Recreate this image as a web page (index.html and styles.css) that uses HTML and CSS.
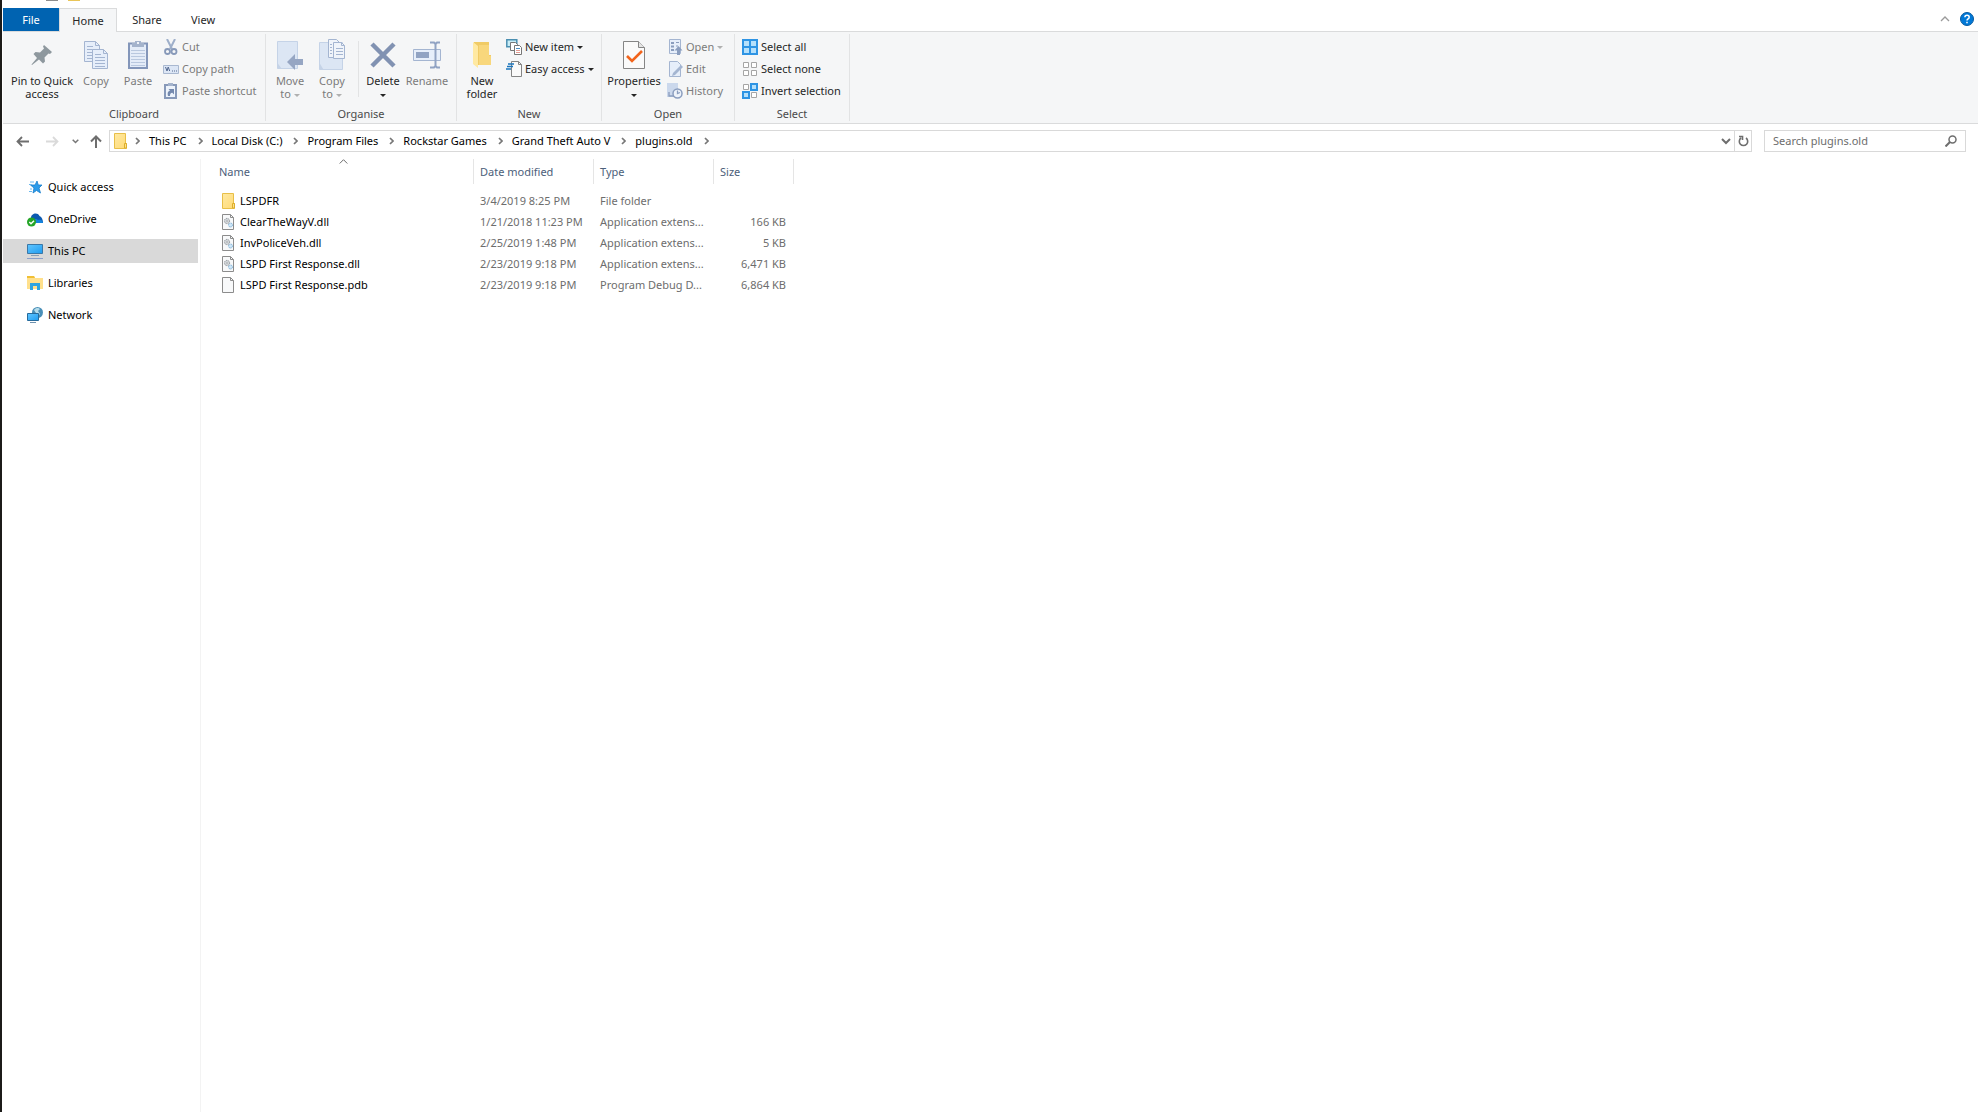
FILE: index.html
```html
<!DOCTYPE html>
<html lang="en"><head><meta charset="utf-8"><title>plugins.old</title>
<link rel="stylesheet" href="styles.css"></head>
<body>
<svg class="defs" width="0" height="0" aria-hidden="true">
<defs>
<linearGradient id="gold" x1="0" y1="0" x2="1" y2="1"><stop offset="0" stop-color="#ffe9a2"/><stop offset="1" stop-color="#ffda75"/></linearGradient>
<linearGradient id="blue" x1="0" y1="0" x2="1" y2="1"><stop offset="0" stop-color="#62c6ff"/><stop offset="1" stop-color="#1f9cf0"/></linearGradient>
</defs>
<symbol id="folder" viewBox="0 0 14 16"><path d="M.5.5h11v10h1v5H.5z" fill="url(#gold)" stroke="#e8bf48"/><path d="M10.500 15V10.500h2V15z" fill="#ffe08a" stroke="#dcae2c"/></symbol>
<symbol id="file" viewBox="0 0 12 16"><path d="M.5.5h8l3 3v12H.5z" fill="#f8f9fa" stroke="#8c8c8c"/><path d="M8.500.5v3h3" fill="none" stroke="#8c8c8c"/></symbol>
<symbol id="dll" viewBox="0 0 12 16"><path d="M.5.5h8l3 3v12H.5z" fill="#f8f9fa" stroke="#8c8c8c"/><path d="M8.500.5v3h3" fill="none" stroke="#8c8c8c"/><circle cx="5" cy="7" r="2.600" fill="#dfe3e6" stroke="#868c91" stroke-dasharray="1.200 .6"/><circle cx="5" cy="7" r="1" fill="#fff" stroke="#868c91" stroke-width=".6"/><circle cx="8.500" cy="11" r="2" fill="#cfe6f7" stroke="#76acd4" stroke-dasharray="1.200 .6"/></symbol>
<symbol id="chev" viewBox="0 0 5 8"><path d="M1 1l3 3-3 3" fill="none" stroke="#777" stroke-width="1.700"/></symbol>
</svg>
<div class="window">
<div class="title-bar"><span class="grey-chip"></span><span class="gold-chip"></span></div>
<nav class="tabs">
<button class="tab file-tab">File</button><button class="tab home-tab">Home</button><button class="tab share-tab">Share</button><button class="tab view-tab">View</button>
<span class="spacer"></span>
<button class="tool" aria-label="Minimise the ribbon"><svg width="10" height="6"><path d="M1 5l4-4 4 4" fill="none" stroke="#9a9a9a" stroke-width="1.300"/></svg></button>
<button class="tool help" aria-label="Help"><svg width="14" height="14"><circle cx="7" cy="7" r="6.500" fill="#0078d7" stroke="#075a9f"/><path d="M4.900 5.200c0-2.700 4.300-2.700 4.300 0C9.200 6.800 7 6.800 7 8.500M7 9.700v1.600" fill="none" stroke="#fff" stroke-width="1.500"/></svg></button>
</nav>
<div class="ribbon">
<section class="group clipboard"><div class="items">
<button class="big pin"><span class="pic"><svg width="22" height="22" viewBox="0 0 22 22"><path d="M13 1l8 7-2 2-1.500-.5-4 4 .5 4-2 2-4-4L1 21l-.5-.5L6 14 2.500 10l2-2 4.500.5 4-4-1-2z" fill="#8e989e"/></svg></span>Pin to Quick<br>access</button>
<button class="big off"><span class="pic"><svg width="26" height="30" viewBox="0 0 26 30"><g fill="#e6eefa" stroke="#a4b5d1"><path d="M1.500 1.500h11l4 4v16h-15z"/><path d="M12.500 1.500v4h4M4 6.500h6M4 9.500h10M4 12.500h10M4 15.500h10M4 18.500h10" fill="none"/><path d="M9.500 9.500h11l4 4v15h-15z"/><path d="M20.500 9.500v4h4M12 14.500h6M12 17.500h10M12 20.500h10M12 23.500h10M12 26.500h10" fill="none"/></g></svg></span>Copy</button>
<button class="big off"><span class="pic"><svg width="22" height="30" viewBox="0 0 22 30"><path d="M2 3.500h18V28H2z" fill="#e4ecf8" stroke="#8396ba" stroke-width="2"/><path d="M4 10.500h14M4 13.500h14M4 16.500h14M4 19.500h14M4 22.500h14M4 25.500h14" stroke="#b9c8df"/><path d="M5 3h3V1h6v2h3v4H5z" fill="#a4b3cc"/><path d="M10 2h2v2h-2z" fill="#eef2f8"/></svg></span>Paste</button>
<div class="stack">
<button class="small off"><svg width="16" height="16"><path d="M4 0l5 10M12 0L7 10" stroke="#9eafca" stroke-width="2"/><g fill="none" stroke="#8799b9" stroke-width="1.800"><circle cx="4.500" cy="12.500" r="2.500"/><circle cx="11" cy="12.500" r="2.500"/></g></svg>Cut</button>
<button class="small off"><svg width="16" height="16"><path d="M.5 4.500h15v8H.5z" fill="#dce6f5" stroke="#a9b8d0"/><path d="M2.500 6l1.500 4 1.200-4 1.500 4M9 10h1M11 10h1M13 10h1" fill="none" stroke="#53688f"/></svg>Copy path</button>
<button class="small off"><svg width="16" height="16"><path d="M2 2h11v13H2z" fill="#edf3fb" stroke="#8799b9" stroke-width="2"/><path d="M5 0h5v3H5z" fill="#a4b3cc"/><path d="M5 13c-1-3 0-5 2-5.500L5.500 6H11v5.500L9.300 9.800C7.500 10 7 11 7 13z" fill="#7489ae"/></svg>Paste shortcut</button>
</div></div><h2>Clipboard</h2></section>
<section class="group organise"><div class="items">
<button class="big off"><span class="pic"><svg width="28" height="30" viewBox="0 0 28 30"><path d="M1.500 1.500h20v27h-20z" fill="#dce6f4" stroke="#c5d3e7"/><path d="M1.500 23l4 5.500h-4z" fill="#c5d3e7"/><path d="M11 22l8-8v5h8v6h-8v5z" fill="#96a6c3"/></svg></span>Move<br>to <i class="drop"></i></button>
<button class="big off"><span class="pic"><svg width="28" height="32" viewBox="0 0 28 32"><path d="M1.500 3.500h23v27h-23z" fill="#dce6f4" stroke="#c5d3e7"/><path d="M1.500 24l4 6.500h-4z" fill="#c5d3e7"/><g fill="#f0f4fa" stroke="#a4b5d1"><path d="M10.500.5h8l3 3v15h-11z"/><path d="M15.500 3.500h8l3 3v13h-11z"/><path d="M23.500 3.500v3h3M18 9.500h7M18 12.500h7M18 15.500h7M12 5.500h2M12 8.500h2M12 11.500h2M12 14.500h2" fill="none"/></g></svg></span>Copy<br>to <i class="drop"></i></button>
<span class="rule"></span>
<button class="big delete"><span class="pic"><svg width="26" height="26"><path d="M2 2l22 22M24 2L2 24" stroke="#8192b2" stroke-width="4.500"/></svg></span>Delete<br><i class="drop"></i></button>
<button class="big off rename"><span class="pic"><svg width="28" height="28"><path d="M.5 8.500h27v11H.5z" fill="#e6eefa" stroke="#a4b5d1"/><path d="M3 11h13v6H3z" fill="#91a3c3"/><path d="M17 1.500h4l1.500 1.500L24 1.500h3M17 26.500h4l1.500-1.500L24 26.500h3M22.500 2v24" fill="none" stroke="#91a3c3" stroke-width="2"/></svg></span>Rename</button>
</div><h2>Organise</h2></section>
<section class="group new"><div class="items">
<button class="big"><span class="pic"><svg width="20" height="28" viewBox="0 0 20 28"><path d="M2 1h15v13h2v10H2z" fill="#f0cb66"/><path d="M7 4h10v11h2v9H7z" fill="#f8d77c"/><path d="M1 1l5 4v22l-5-4z" fill="#ffe9a2"/></svg></span>New<br>folder</button>
<div class="stack">
<button class="small"><svg width="16" height="16"><path d="M.8.8h10v7H.8z" fill="#c8edf7" stroke="#4b8fb1" stroke-width="1.500"/><path d="M4.500 3.500h5l2 2v6h-7z" fill="#fff" stroke="#777"/><path d="M8.500 6.500h5l2 2v7h-7z" fill="#fff" stroke="#777"/><path d="M10 9.500h4" stroke="#4c91c7"/><path d="M10 11.500h4M10 13.500h4" stroke="#e29b92"/></svg>New item <i class="drop"></i></button>
<button class="small"><svg width="16" height="16"><path d="M5.500.5h7l3 3v12h-10z" fill="#fafafa" stroke="#858585"/><path d="M12.500.5v3h3" fill="none" stroke="#858585"/><path d="M2 3h6M1 5.500h6M0 8h5" stroke="#1b75bd" stroke-width="1.400"/></svg>Easy access <i class="drop"></i></button>
</div></div><h2>New</h2></section>
<section class="group open"><div class="items">
<button class="big properties"><span class="pic"><svg width="22" height="28" viewBox="0 0 22 28"><path d="M.5.5h15l6 6v21H.5z" fill="#fafafa" stroke="#858585"/><path d="M15.500.5v6h6" fill="#e5e5e5" stroke="#858585"/><path d="M4 15l5 5 10-10" fill="none" stroke="#f2641c" stroke-width="2.600"/></svg></span>Properties<br><i class="drop"></i></button>
<div class="stack">
<button class="small off"><svg width="16" height="16"><path d="M2.500.5h11v14h-11z" fill="#e6eefa" stroke="#a4b5d1"/><path d="M4 3h3v2H4zM4 6.500h3v2H4zM4 10h3v2H4zM9 3h3v1H9zM9 6.500h2v1H9z" fill="#8a9dbe"/><path d="M11.500 7l4 4.500H13V16h-3v-4.500H7.500z" fill="#8a9dbe"/></svg>Open <i class="drop"></i></button>
<button class="small off"><svg width="16" height="16"><path d="M2.500.5h8l3 3v12h-11z" fill="#e6eefa" stroke="#a4b5d1"/><path d="M5 15l1-3 8-8 2 2-8 8z" fill="#a4b5d1"/></svg>Edit</button>
<button class="small off"><svg width="16" height="16"><path d="M0 0h11v14H0z" fill="#cbd8ec"/><circle cx="10.500" cy="10.500" r="4.500" fill="#eef3fa" stroke="#8a9dbe" stroke-width="1.500"/><path d="M10.500 7.500v3l2.500-1M2 9v4h5" fill="none" stroke="#8a9dbe" stroke-width="1.300"/></svg>History</button>
</div></div><h2>Open</h2></section>
<section class="group select"><div class="items"><div class="stack">
<button class="small"><svg width="16" height="16"><path d="M0 0h16v16H0z" fill="#2e94e4"/><path d="M2 2h5v5H2zM9 2h5v5H9zM2 9h5v5H2zM9 9h5v5H9z" fill="#b5e0fb"/></svg>Select all</button>
<button class="small"><svg width="16" height="16"><path d="M1.500 1.500h5v5h-5zM9.500 1.500h5v5h-5zM1.500 9.500h5v5h-5zM9.500 9.500h5v5h-5z" fill="#fff" stroke="#a5a5a5"/></svg>Select none</button>
<button class="small"><svg width="16" height="16"><path d="M1.500 1.500h5v5h-5zM9.500 9.500h5v5h-5z" fill="#fff" stroke="#a5a5a5"/><path d="M9 1h6v6H9zM1 9h6v6H1z" fill="#b5e0fb" stroke="#2e94e4" stroke-width="2"/></svg>Invert selection</button>
</div></div><h2>Select</h2></section>
</div>
<div class="address-row">
<button class="nav-btn back" aria-label="Back"><svg width="13" height="11"><path d="M13 5.500H1.500M6 1L1.500 5.500 6 10" fill="none" stroke="#6e6e6e" stroke-width="1.800"/></svg></button>
<button class="nav-btn forward" aria-label="Forward"><svg width="13" height="11"><path d="M0 5.500h11.500M7 1l4.500 4.500L7 10" fill="none" stroke="#dadada" stroke-width="1.800"/></svg></button>
<button class="nav-btn recent" aria-label="Recent locations"><svg width="7" height="5"><path d="M.7.7l2.800 2.800L6.300.7" fill="none" stroke="#777" stroke-width="1.500"/></svg></button>
<button class="nav-btn up" aria-label="Up"><svg width="12" height="13"><path d="M6 13V1.500M1 6.500l5-5 5 5" fill="none" stroke="#6e6e6e" stroke-width="2"/></svg></button>
<div class="address">
<svg class="folder" width="14" height="16"><use href="#folder"/></svg>
<svg class="chev" width="5" height="8"><use href="#chev"/></svg><a href="#">This PC</a>
<svg class="chev" width="5" height="8"><use href="#chev"/></svg><a href="#">Local Disk (C:)</a>
<svg class="chev" width="5" height="8"><use href="#chev"/></svg><a href="#">Program Files</a>
<svg class="chev" width="5" height="8"><use href="#chev"/></svg><a href="#">Rockstar Games</a>
<svg class="chev" width="5" height="8"><use href="#chev"/></svg><a href="#">Grand Theft Auto V</a>
<svg class="chev" width="5" height="8"><use href="#chev"/></svg><a href="#">plugins.old</a>
<svg class="chev" width="5" height="8"><use href="#chev"/></svg>
<span class="spacer"></span>
<button class="history" aria-label="Previous locations"><svg width="10" height="7"><path d="M1 1l4 4 4-4" fill="none" stroke="#6e6e6e" stroke-width="2"/></svg></button>
<button class="refresh" aria-label="Refresh"><svg width="11" height="12"><path d="M8 3A4.200 4.200 0 1 1 3 3M1 1.500h3.500V5" fill="none" stroke="#6e6e6e" stroke-width="1.600"/></svg></button>
</div>
<div class="search"><input type="text" placeholder="Search plugins.old" aria-label="Search plugins.old"><svg width="12" height="12"><circle cx="7.500" cy="4.500" r="3.500" fill="none" stroke="#6e6e6e" stroke-width="1.500"/><path d="M5 7L.5 11.500" stroke="#6e6e6e" stroke-width="2"/></svg></div>
</div>
<div class="body">
<nav class="side">
<a href="#"><svg width="16" height="16"><path d="M10 2l1.300 4H15l-3 3 1.500 5-4-2.500L6 14l1-5-3.500-3H8z" fill="#2b9bea" stroke="#1b7fcb" stroke-width=".8"/><path d="M3 3h4M2 5.500h3M3 10h2M2 12.500h3" stroke="#6ab8ee"/></svg>Quick access</a>
<a href="#"><svg width="16" height="16"><path d="M4 11V7c0-5 7-6 8.500-2C15 6 16 9 16 12H5z" fill="#0c5ab0"/><path d="M6 12c0-4 3-5 5-3 2-1 5 0 5 3z" fill="#1583dd"/><circle cx="4.500" cy="11" r="4.500" fill="#24a527"/><path d="M2.300 11l1.700 1.700L7 9.700" fill="none" stroke="#fff" stroke-width="1.400"/></svg>OneDrive</a>
<a href="#" class="current"><svg width="16" height="16"><path d="M.5 1.500h15v9H.5z" fill="url(#blue)" stroke="#3a78a8"/><path d="M4 12.500h8" stroke="#8ba0b5"/><path d="M0 15.500h16" stroke="#8ba0c9"/></svg>This PC</a>
<a href="#"><svg width="16" height="16"><path d="M0 1h7l1 2h8v11H0z" fill="#ffe08c"/><path d="M0 1h7l1 2H0z" fill="#f0bf35"/><path d="M3 15V8h10v7h-3v-4H6v4z" fill="#2da4e0"/></svg>Libraries</a>
<a href="#"><svg width="16" height="16"><circle cx="10.500" cy="5.500" r="5.500" fill="#4a8fb8"/><path d="M7 3c2-3 5-2 6-1l-2 2 2 3-2 2-2-3z" fill="#b5dcea"/><path d="M.5 6.500h11v7H.5z" fill="url(#blue)" stroke="#276a9b"/><path d="M3 15.500h6" stroke="#6e92af"/></svg>Network</a>
</nav>
<main>
<table>
<colgroup><col class="c-name"><col class="c-date"><col class="c-type"><col class="c-size"></colgroup>
<thead><tr><th>Name<svg class="sort" width="9" height="5"><path d="M.7 4.500l3.800-3.800 3.800 3.800" fill="none" stroke="#6b6b6b"/></svg></th><th>Date modified</th><th>Type</th><th>Size</th></tr></thead>
<tbody>
<tr><td><span class="name"><svg width="14" height="16"><use href="#folder"/></svg>LSPDFR</span></td><td>3/4/2019 8:25 PM</td><td>File folder</td><td></td></tr>
<tr><td><span class="name"><svg width="14" height="16"><use href="#dll" width="12"/></svg>ClearTheWayV.dll</span></td><td>1/21/2018 11:23 PM</td><td>Application extens...</td><td>166 KB</td></tr>
<tr><td><span class="name"><svg width="14" height="16"><use href="#dll" width="12"/></svg>InvPoliceVeh.dll</span></td><td>2/25/2019 1:48 PM</td><td>Application extens...</td><td>5 KB</td></tr>
<tr><td><span class="name"><svg width="14" height="16"><use href="#dll" width="12"/></svg>LSPD First Response.dll</span></td><td>2/23/2019 9:18 PM</td><td>Application extens...</td><td>6,471 KB</td></tr>
<tr><td><span class="name"><svg width="14" height="16"><use href="#file" width="12"/></svg>LSPD First Response.pdb</span></td><td>2/23/2019 9:18 PM</td><td>Program Debug D...</td><td>6,864 KB</td></tr>
</tbody></table>
</main>
</div>
</div>
</body></html>
```

FILE: styles.css
```css
* { box-sizing: border-box; }
body { margin: 0; font: 11px/16px "Noto Sans", "Open Sans", sans-serif; color: #000; background: #fff; }
button { font: inherit; color: inherit; background: none; border: 0; padding: 0; margin: 0; }
a { color: inherit; text-decoration: none; }
svg { flex: none; display: block; }
.defs { position: absolute; }
.window { display: flex; flex-direction: column; min-height: 100vh; border-left: 2px solid #1c1b19; padding-left: 1px; }
.spacer { flex: 1; }

.title-bar { display: flex; height: 8px; padding-left: 43px; gap: 10px; }
.title-bar span { width: 12px; height: 1px; }
.grey-chip { background: #8d8d8d; }
.gold-chip { background: #e9c558; }

.tabs { display: flex; height: 24px; border-bottom: 1px solid #dadbdc; }
.tab { height: 24px; color: #262626; }
.file-tab { width: 56px; height: 23px; background: #0063b1; color: #fff; }
.home-tab { width: 58px; background: #f5f6f7; border: 1px solid #dadbdc; border-bottom: 0; }
.share-tab { width: 60px; }
.view-tab { width: 52px; }
.tool { display: grid; place-items: center; width: 18px; height: 22px; }
.help { margin: 0 2px 0 4px; }

.ribbon { display: flex; height: 92px; padding: 2px 0; background: #f5f6f7; border-bottom: 1px solid #dadbdc; }
.group { display: flex; flex-direction: column; justify-content: space-between; border-right: 1px solid #e2e3e4; }
.items { display: flex; align-items: flex-start; padding-top: 2px; }
.group h2 { margin: 0; font-size: 11px; line-height: 14px; font-weight: 400; text-align: center; color: #4a4a4a; }
.clipboard { width: 263px; }
.clipboard .items { padding-left: 6px; }
.organise { width: 191px; }
.organise .items, .open .items { padding-left: 3px; }
.new { width: 145px; }
.new .items, .select .items { padding-left: 4px; }
.open { width: 133px; }
.select { width: 115px; }
.big { width: 42px; line-height: 13px; color: #262626; white-space: nowrap; display: block; }
.big.pin { width: 66px; }
.big.properties { width: 58px; }
.big.rename { width: 46px; }
.pic { display: grid; place-items: center; height: 38px; }
.off, .big.off { color: #7b7b7b; }
.off .drop { color: #b0b0b0; }
.stack { margin-left: 3px; }
.clipboard .stack, .open .stack { margin-left: 4px; }
.small { display: flex; align-items: center; gap: 3px; height: 22px; color: #262626; white-space: nowrap; }
.small.off { color: #7b7b7b; }
.drop { display: inline-block; border: 3px solid transparent; border-top-color: currentColor; border-bottom: 0; vertical-align: middle; }
.rule { width: 1px; height: 56px; margin: 5px 3px 0 5px; background: #e2e3e4; }

.address-row { display: flex; align-items: center; height: 35px; padding: 0 12px 1px 13px; }
.nav-btn { display: grid; place-items: center; }
.back { width: 13px; }
.forward { width: 13px; margin-left: 17px; }
.recent { width: 7px; margin-left: 13px; }
.up { width: 12px; margin-left: 11px; }
.address { flex: 1; display: flex; align-items: center; height: 22px; margin: 0 12px 0 7px; padding-left: 4px; border: 1px solid #d9d9d9; }
.address .chev { margin: 0 9px 0 7px; }
.address a { margin-right: 4px; }
.history { display: grid; place-items: center; width: 16px; height: 20px; }
.refresh { display: grid; place-items: center; width: 17px; height: 20px; border-left: 1px solid #d9d9d9; }
.search { display: flex; align-items: center; width: 202px; height: 22px; padding: 0 8px; border: 1px solid #d9d9d9; }
.search input { flex: 1; min-width: 0; border: 0; outline: 0; padding: 0; font: inherit; background: none; }
.search input::placeholder { color: #6d6d6d; opacity: 1; }

.body { flex: 1; display: flex; }
.side { width: 198px; padding-top: 16px; border-right: 1px solid #f3f3f3; display: flex; flex-direction: column; gap: 8px; }
.side a { display: flex; align-items: center; gap: 5px; height: 24px; width: 195px; padding-left: 24px; }
.current { background: #d9d9d9; }

table { table-layout: fixed; width: 593px; border-collapse: separate; border-spacing: 0; }
.c-name { width: 273px; }
.c-date, .c-type { width: 120px; }
.c-size { width: 80px; }
th, td { padding: 0 0 0 6px; text-align: left; font-weight: 400; white-space: nowrap; }
th { position: relative; height: 25px; color: #4c607a; border-right: 1px solid #e5e5e5; }
th:first-child { padding-left: 18px; }
.sort { position: absolute; left: 138px; top: 0; }
td { height: 21px; color: #6d6d6d; }
td:first-child { padding-left: 21px; color: #000; }
.name { display: flex; align-items: center; gap: 4px; }
td:last-child { text-align: right; padding-right: 8px; }
tbody::before { content: ""; display: block; height: 6px; }
```
